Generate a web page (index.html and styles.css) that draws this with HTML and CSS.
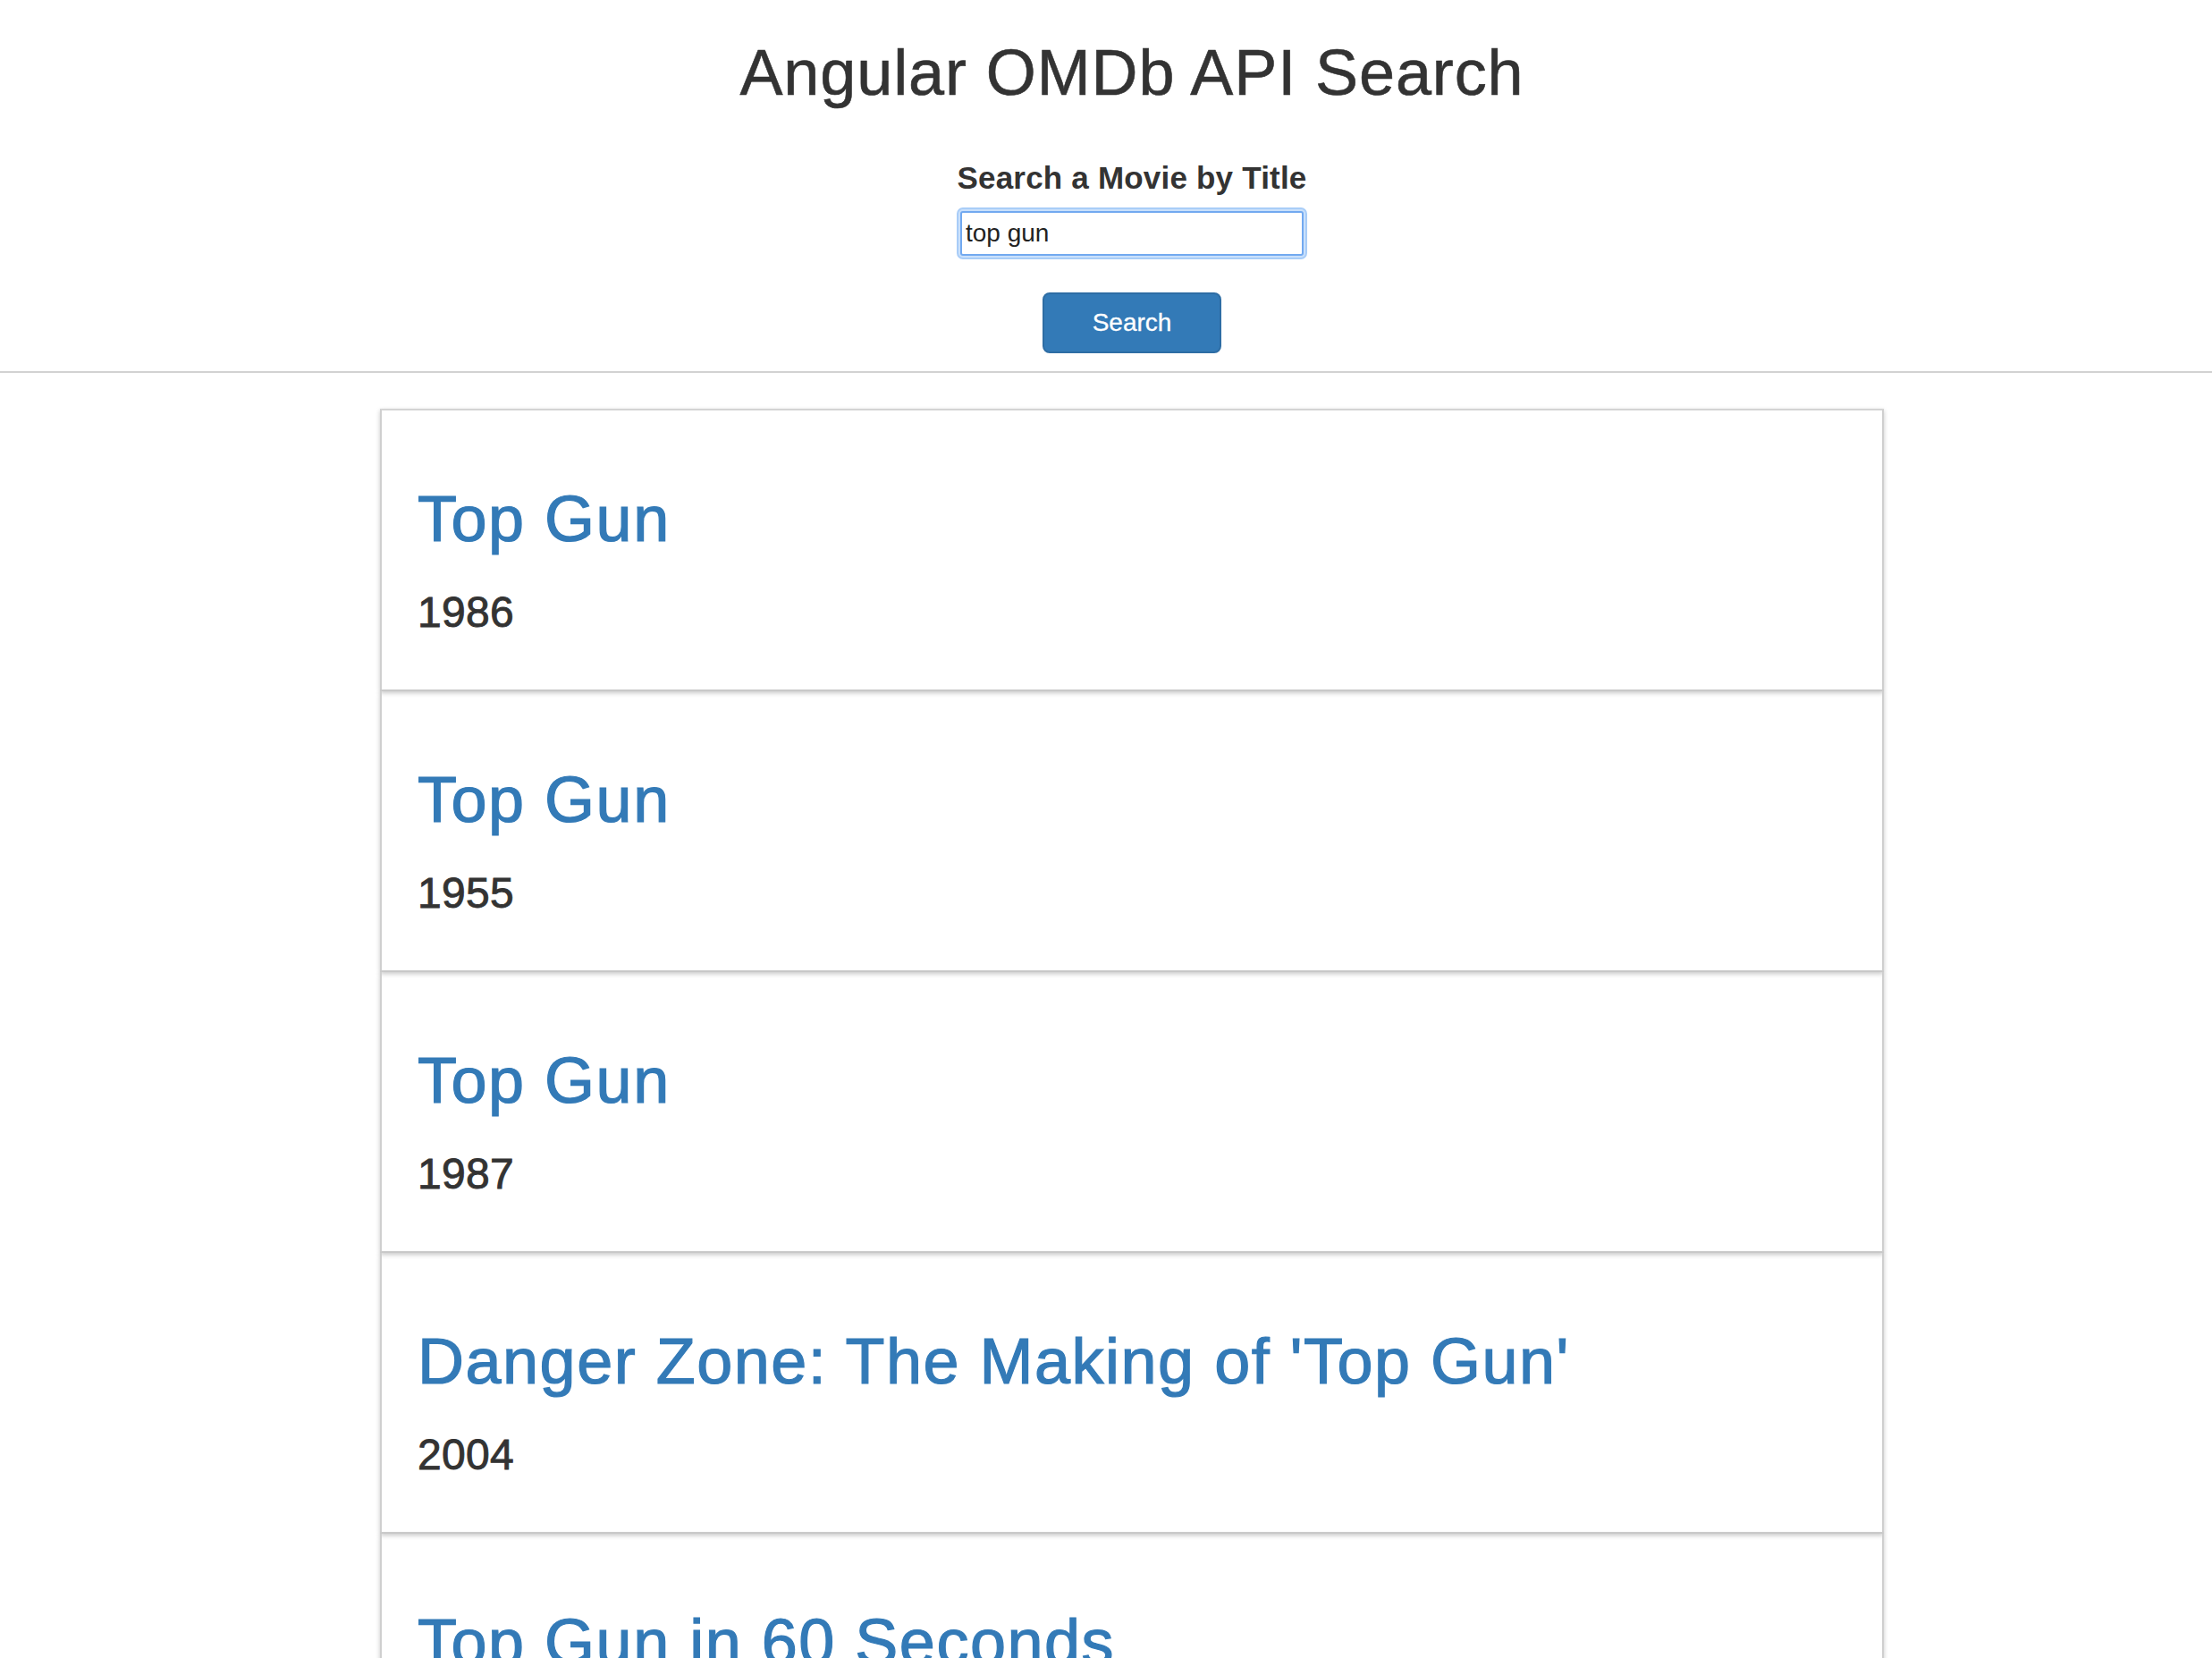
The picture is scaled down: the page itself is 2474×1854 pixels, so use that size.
FILE: index.html
```html
<!DOCTYPE html>
<html lang="en">
<head>
<meta charset="utf-8">
<title>Angular OMDb API Search</title>
<link rel="stylesheet" href="styles.css">
</head>
<body>
<header class="header">
  <h1 class="page-title">Angular OMDb API Search</h1>
  <form class="search-form">
    <label class="search-label" for="q">Search a Movie by Title</label>
    <input class="search-input" id="q" type="text" value="top gun">
    <button class="search-btn" type="button">Search</button>
  </form>
</header>
<hr class="divider">
<main class="results">
  <div class="result-list">
    <div class="card"><h1 class="card-title">Top Gun</h1><h3 class="card-year">1986</h3></div>
    <div class="card"><h1 class="card-title">Top Gun</h1><h3 class="card-year">1955</h3></div>
    <div class="card"><h1 class="card-title">Top Gun</h1><h3 class="card-year">1987</h3></div>
    <div class="card"><h1 class="card-title">Danger Zone: The Making of 'Top Gun'</h1><h3 class="card-year">2004</h3></div>
    <div class="card"><h1 class="card-title">Top Gun in 60 Seconds</h1><h3 class="card-year">2006</h3></div>
  </div>
</main>
</body>
</html>
```

FILE: styles.css
```css
html, body {
  margin: 0;
  padding: 0;
  background: #fff;
}

body {
  font-family: "Liberation Sans", Arial, Helvetica, sans-serif;
  color: #333;
  overflow: hidden;
}

.header {
  padding: 42px 0 0 58px;
  display: flex;
  flex-direction: column;
  align-items: center;
}

.page-title {
  margin: 0;
  font-size: 72px;
  line-height: 79px;
  font-weight: 400;
  letter-spacing: 0.9px;
  -webkit-text-stroke: 0.6px #333;
  color: #333;
}

.search-form {
  margin-top: 57px;
  display: flex;
  flex-direction: column;
  align-items: center;
}

.search-label {
  display: block;
  font-size: 35px;
  line-height: 42px;
  font-weight: 700;
  letter-spacing: 0.2px;
  color: #333;
  margin-bottom: 16px;
}

.search-input {
  box-sizing: border-box;
  width: 384px;
  height: 50px;
  margin: 0;
  padding: 0 4px;
  font-family: "Liberation Sans", Arial, sans-serif;
  font-size: 28px;
  color: #222;
  background: #fff;
  border: 2px solid #72a9f0;
  border-radius: 3px;
  box-shadow: 0 0 0 2px #c9e0fb, 0 0 0 4px #a9cdf8;
  outline: none;
}

.search-btn {
  box-sizing: border-box;
  margin-top: 41px;
  width: 200px;
  height: 68px;
  padding: 0;
  font-family: "Liberation Sans", Arial, sans-serif;
  font-size: 28px;
  color: #fff;
  -webkit-text-stroke: 0.3px #fff;
  background: #337ab7;
  border: 2px solid #2e6da4;
  border-radius: 8px;
}

.divider {
  margin: 20px 0 0;
  border: 0;
  height: 2px;
  background: #d2d2d2;
}

.results {
  padding: 40px 0 0 58px;
}

.result-list {
  width: 1682px;
  margin: 0 auto;
  display: flex;
  flex-direction: column;
}

.card {
  box-sizing: border-box;
  height: 314px;
  padding: 82px 40px 0 40px;
  border: 2px solid #cfcfcf;
  border-top: 0;
  box-shadow: 0 2px 5px rgba(0, 0, 0, 0.22);
  display: flex;
  flex-direction: column;
}

.card:first-child {
  border-top: 2px solid #d4d4d4;
  height: 316px;
}

.card-title {
  margin: 0;
  font-size: 72px;
  line-height: 79px;
  font-weight: 400;
  letter-spacing: 1.5px;
  -webkit-text-stroke: 1.2px #337ab7;
  color: #337ab7;
  white-space: nowrap;
}

.card-year {
  margin: 38px 0 0;
  font-size: 48px;
  line-height: 53px;
  font-weight: 400;
  letter-spacing: 0.3px;
  -webkit-text-stroke: 0.9px #333;
  color: #333;
}
```
